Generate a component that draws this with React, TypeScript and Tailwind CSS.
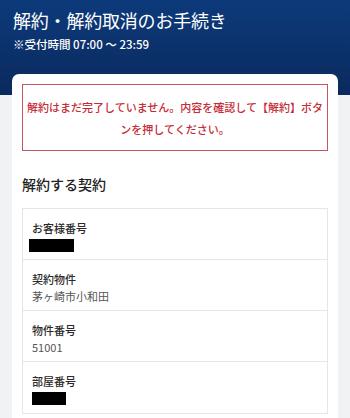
import React from 'react'

const rows: { label: string; value?: string; redact?: string }[] = [
  { label: 'お客様番号', redact: 'w-[45px] ml-[-3px]' },
  { label: '契約物件', value: '茅ヶ崎市小和田' },
  { label: '物件番号', value: '51001' },
  { label: '部屋番号', redact: 'w-[34px]' },
]

export default function App() {
  return (
    <div
      className="min-h-[418px] bg-[#f1f2f4]"
      style={{ fontFamily: '"Noto Sans CJK JP", "Noto Sans", sans-serif' }}
    >
      {/* Header */}
      <header className="h-[95px] bg-gradient-to-b from-[#0d3a7b] to-[#0a2a5d] px-[13px] pt-[7px] text-white">
        <h1 className="text-[18px] leading-[26px] font-normal tracking-[-0.2px]">解約・解約取消のお手続き</h1>
        <p className="mt-[3px] text-[11.5px] leading-[16px] font-medium">※受付時間 07:00 〜 23:59</p>
      </header>

      {/* Card */}
      <main className="mx-[12px] -mt-[21px] rounded-t-[7px] bg-white px-[10px] pt-[10px] pb-[10px]">
        <div className="border border-[#c4575d] px-[4px] pt-[11px] pb-[10px] text-center text-[11px] leading-[22px] font-medium text-[#c42d38]">
          解約はまだ完了していません。内容を確認して【解約】ボタンを押してください。
        </div>

        <h2 className="mt-[22px] text-[14px] leading-[22px] font-medium text-[#222]">解約する契約</h2>

        <div className="mt-[13px] border border-[#e6e6e6]">
          {rows.map((r) => (
            <div key={r.label} className="h-[51px] border-b border-[#e6e6e6] px-[9px] pt-[10px] last:border-b-0">
              <div className="text-[11px] leading-[18px] font-medium text-[#2a2a2a]">{r.label}</div>
              {r.redact ? (
                <div className={`mt-[2px] h-[13px] bg-black ${r.redact}`} />
              ) : (
                <div className="text-[11px] leading-[16px] text-[#555]">{r.value}</div>
              )}
            </div>
          ))}
        </div>
      </main>
    </div>
  )
}
